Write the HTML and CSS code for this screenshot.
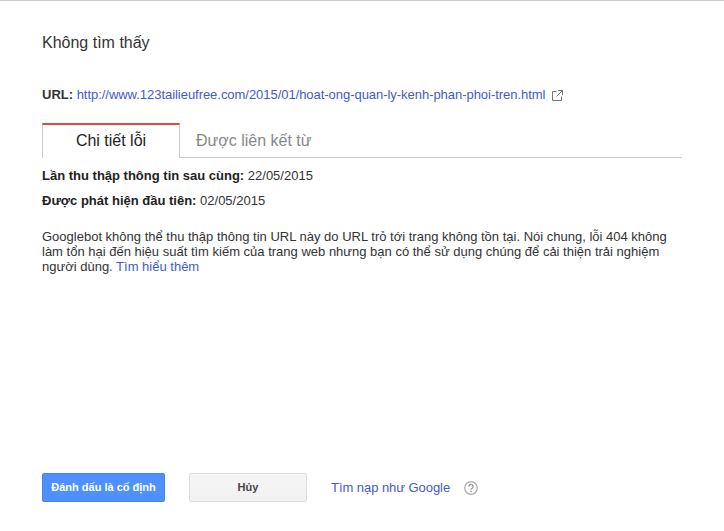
FILE: index.html
```html
<!DOCTYPE html>
<html lang="vi">
<head>
  <meta charset="UTF-8"/>
  <title>Không tìm thấy</title>
  <link rel="stylesheet" href="styles.css">
</head>
<body>
  <main class="dialog">
    <h1>Không tìm thấy</h1>
    <p class="url-row">
      <strong>URL:</strong>
      <a href="#">http://www.123tailieufree.com/2015/01/hoat-ong-quan-ly-kenh-phan-phoi-tren.html</a>
      <svg class="ext-icon" viewBox="0 0 11 11" width="11" height="11" fill="none" stroke="#777" stroke-width="1">
        <path d="M4.5 1.5H.5v9h9V6.5"/>
        <path d="M6 .5h4.5V5M10.2.8 4.5 6.5"/>
      </svg>
    </p>
    <div class="tabs">
      <div class="tab active">Chi tiết lỗi</div>
      <div class="tab">Được liên kết từ</div>
    </div>
    <p class="meta"><strong>Lần thu thập thông tin sau cùng:</strong> 22/05/2015</p>
    <p class="meta"><strong>Được phát hiện đầu tiên:</strong> 02/05/2015</p>
    <p class="desc">Googlebot không thể thu thập thông tin URL này do URL trỏ tới trang không tồn tại. Nói chung, lỗi 404 không làm tổn hại đến hiệu suất tìm kiếm của trang web nhưng bạn có thể sử dụng chúng để cải thiện trải nghiệm người dùng. <a href="#">Tìm hiểu thêm</a></p>
    <div class="actions">
      <button class="btn primary">Đánh dấu là cố định</button>
      <button class="btn cancel">Hủy</button>
      <a class="fetch" href="#">Tìm nạp như Google</a>
      <svg class="help" viewBox="0 0 14 14" width="14" height="14" fill="none">
        <circle cx="7" cy="7" r="6.3" stroke="#aaa" stroke-width="1.2"/>
        <path d="M4.9 5.4a2.1 2.1 0 1 1 3.2 1.8c-.7.4-1.1.8-1.1 1.6" stroke="#999" stroke-width="1.3"/>
        <rect x="6.3" y="9.6" width="1.4" height="1.5" fill="#999"/>
      </svg>
    </div>
  </main>
</body>
</html>
```

FILE: styles.css
```css
html,body{margin:0;height:100%;}
body{background:#fff;color:#222;font-family:"Liberation Sans",Arial,sans-serif;font-size:13px;line-height:15px;}
a{color:#3f5bd0;text-decoration:none;}
.dialog{box-sizing:border-box;width:724px;height:531px;padding:33px 42px 0;border-top:1px solid #ccc;display:flex;flex-direction:column;}
h1{margin:0;font-size:16px;font-weight:normal;line-height:18px;color:#333;}
.url-row{margin:35px 0 0;height:15px;white-space:nowrap;}
.url-row strong{color:#333;}
.url-row a{letter-spacing:-.04px;}
.ext-icon{margin-left:3px;vertical-align:-2px;}
.tabs{display:flex;margin-top:21px;height:34px;border-bottom:1px solid #ccc;}
.tab{box-sizing:border-box;height:34px;padding:9px 16px 0;font-size:16px;line-height:18px;color:#888;}
.tab.active{width:138px;height:35px;padding:7px 0 0;text-align:center;color:#222;background:#fff;border:1px solid #ccc;border-top:2px solid #dd4b39;border-bottom:0;}
.meta{margin:10px 0 0;color:#333;}
.meta strong{color:#222;}
.desc{margin:21px 0 0;width:640px;color:#333;}
.actions{display:flex;align-items:center;margin-top:auto;margin-bottom:29px;}
.btn{box-sizing:border-box;height:29px;padding:0 0 1px;border-radius:2px;font:bold 11px "Liberation Sans",Arial,sans-serif;}
.primary{width:123px;background:#4d90fe;border:1px solid #4285f0;color:#fff;}
.cancel{width:118px;margin-left:24px;background:linear-gradient(#f5f5f5,#f1f1f1);border:1px solid #dcdcdc;color:#444;}
.fetch{margin-left:24px;font-size:13px;letter-spacing:-.05px;}
.help{margin-left:14px;}
```
